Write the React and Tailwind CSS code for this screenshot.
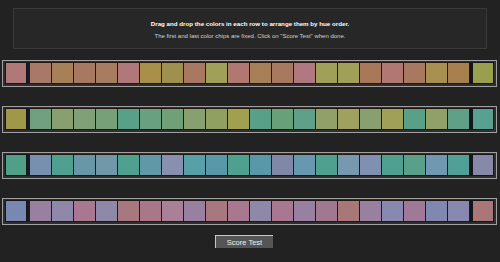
import React from "react";

const rows = [
  [
    "#b07878", "#a87868", "#a88058", "#a87860", "#a87c60", "#b07878", "#a89048",
    "#a09050", "#a87860", "#a0a058", "#b07870", "#a88058", "#a87860", "#b07880",
    "#a0a058", "#a0a058", "#a87858", "#b07870", "#a87860", "#a89050", "#a88050",
    "#98a050",
  ],
  [
    "#a09848", "#70a080", "#88a070", "#80a078", "#78a078", "#58a088", "#68a080",
    "#70a078", "#88a070", "#90a060", "#a0a050", "#58a088", "#68a078", "#60a088",
    "#90a068", "#a0a060", "#88a070", "#a0a058", "#58a088", "#90a068", "#60a088",
    "#58a090",
  ],
  [
    "#50a088", "#7890b0", "#50a090", "#6898a8", "#7098a8", "#50a090", "#6098a8",
    "#8890b0", "#58a0a8", "#5898a8", "#50a090", "#5898a8", "#8088a8", "#6898b0",
    "#50a090", "#7898b0", "#8090b0", "#50a090", "#58a088", "#7098b0", "#50a098",
    "#8888a8",
  ],
  [
    "#7888b0", "#9880a0", "#9088a8", "#a87890", "#9088a8", "#a87880", "#a87888",
    "#a88098", "#9880a0", "#a87880", "#a87890", "#9088a8", "#a87890", "#9880a0",
    "#a07890", "#a87878", "#9880a0", "#8888b0", "#a07898", "#8088b0", "#8888b0",
    "#a87878",
  ],
];

const ChipRow = ({ colors }) => {
  const first = colors[0];
  const last = colors[colors.length - 1];
  const middle = colors.slice(1, -1);

  return (
    <div className="ml-[2px] w-[495px] border border-[#a0a0a0] bg-[#2e2e2e] p-[2px] pt-[1px]">
      <div className="flex h-[22px]">
        <div
          className="w-[22px] h-[22px] border border-[#14161c]"
          style={{ backgroundColor: first }}
        />
        <div className="w-[2px] h-[22px] bg-[#181a20]" />
        <div className="flex border-r border-[#221a12]">
          {middle.map((c, i) => (
            <div
              key={i}
              className="w-[22px] h-[22px] border-l border-y border-[#221a12]"
              style={{ backgroundColor: c }}
            />
          ))}
        </div>
        <div className="w-[2px] h-[22px] bg-[#14141a]" />
        <div
          className="w-[22px] h-[22px] border border-[#14161c]"
          style={{ backgroundColor: last }}
        />
      </div>
    </div>
  );
};

const App = () => {
  return (
    <div className="w-[500px] h-[262px] bg-[#222222] overflow-hidden font-['Liberation_Sans',Arial,sans-serif]">
      <div className="pt-[8px] px-[13px]">
        <div className="h-[41px] border border-[#3a3a3a] bg-[#272727] flex flex-col items-center pt-[11px]">
          <p className="text-[6.2px] leading-[8px] font-bold text-white">
            Drag and drop the colors in each row to arrange them by hue order.
          </p>
          <p className="mt-[4px] text-[6px] leading-[8px] text-[#d4d4d4]">
            The first and last color chips are fixed. Click on "Score Test" when done.
          </p>
        </div>
      </div>

      <div className="mt-[11px] flex flex-col gap-[19px]">
        {rows.map((r, i) => (
          <ChipRow key={i} colors={r} />
        ))}
      </div>

      <div className="mt-[10px] flex justify-center pr-[12px]">
        <button className="w-[58px] h-[13px] bg-[#555555] border-t border-l border-[#c8c8c8] text-[7.5px] leading-[11px] text-[#f0f0f0]">
          Score Test
        </button>
      </div>
    </div>
  );
};

export default App;
